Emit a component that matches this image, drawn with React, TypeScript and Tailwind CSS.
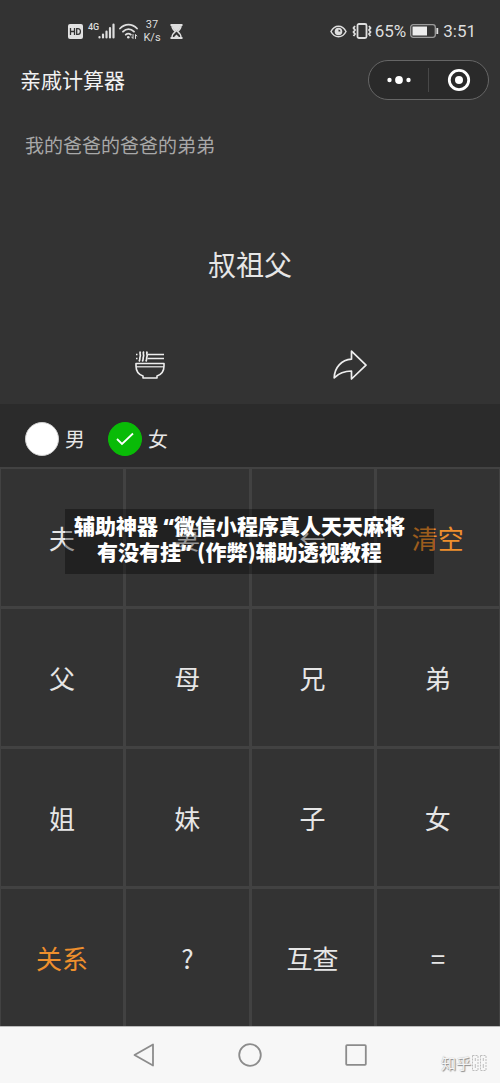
// Kinship calculator: pick relatives on the keypad and read the resulting title.
import React, { useState } from 'react';

interface Key {
  label: string;
  accent?: boolean;
}

const KEYS: Key[] = [
  { label: '夫' },
  { label: '妻' },
  { label: '←' },
  { label: '清空', accent: true },
  { label: '父' },
  { label: '母' },
  { label: '兄' },
  { label: '弟' },
  { label: '姐' },
  { label: '妹' },
  { label: '子' },
  { label: '女' },
  { label: '关系', accent: true },
  { label: '?' },
  { label: '互查' },
  { label: '=' },
];

function StatusBar() {
  return (
    <div className="flex h-[52px] items-center justify-between pt-[10px] pr-6 pl-[68px] font-[Roboto,sans-serif] text-[#dedede]">
      <div className="flex items-center">
        <svg width="15" height="15" viewBox="0 0 15 15">
          <rect width="15" height="15" rx="2" fill="#e2e2e2" />
          <path d="M2.5 4v7M6.5 4v7M2.5 7.5h4M8.7 4.6v5.8h1.2c1.6 0 2.5-1 2.5-2.9s-.9-2.9-2.5-2.9z" fill="none" stroke="#333" strokeWidth="1.3" />
        </svg>
        <span className="mb-2 ml-[5px] w-[9px] text-[9px] leading-[9px] font-medium">4G</span>
        <svg className="ml-px" width="17" height="16" viewBox="0 0 17 16" fill="none" stroke="currentColor" strokeWidth="2.2" strokeLinecap="round">
          <path d="M1.5 14v.5M5 11.5v3M8.5 8.500v6M12 5v9.500M15.500 1.500v13" />
        </svg>
        <svg className="ml-1" width="19" height="16" viewBox="0 0 19 16" fill="none" stroke="currentColor" strokeWidth="1.800" strokeLinecap="round">
          <path d="M1 5.500C6 .3 13 .3 18 5.500M4 8.700c3.400-3.500 7.600-3.500 11 0M6.800 11.700c1.500-1.500 3.500-1.500 5 0" />
          <circle cx="9.300" cy="14.300" r="1.300" fill="currentColor" stroke="none" />
          <path d="M14 11.500v4l-1.300-1.500M16.500 15.500v-4l1.300 1.500" strokeWidth="1" />
        </svg>
        <span className="ml-1 w-5 text-center text-[11px] leading-[13px]">
          37
          <br />
          K/s
        </span>
        <svg className="ml-2" width="13" height="15" viewBox="0 0 13 15" fill="none" stroke="currentColor">
          <path d="M.5 1h12M.5 14h12" strokeWidth="2" />
          <path d="M2 2c0 3 1.500 4 3.500 5.500C3.500 9 2 10.500 2 13.500M11 2c0 3-1.500 4-3.500 5.500 2 1.500 3.500 3 3.500 6" strokeWidth="1.500" />
          <path d="M2.500 2h8c-.3 2.500-1.500 4-4 5.500C4 6 2.800 4.500 2.500 2zM3.500 13.500l3-3 3 3z" fill="currentColor" stroke="none" />
        </svg>
      </div>

      <div className="flex items-center text-[17px] leading-5">
        <svg width="17" height="13" viewBox="0 0 17 13" fill="none" stroke="currentColor" strokeWidth="1.500">
          <path d="M1 6.500C4.500-.5 12.500-.5 16 6.500 12.500 13.500 4.500 13.500 1 6.500z" />
          <circle cx="8.500" cy="6.500" r="3.800" fill="currentColor" stroke="none" />
          <path d="M8.500 6.500V4.500a2 2 0 0 1 2 2z" fill="#333" stroke="none" />
        </svg>
        <svg className="ml-[5px]" width="20" height="16" viewBox="0 0 20 16" fill="none" stroke="currentColor">
          <rect x="5.500" y="1" width="9" height="14" rx="1.500" strokeWidth="1.800" />
          <path d="M3 3L1.500 5 3 7 1.500 9 3 11l-1.500 2M17 3l1.500 2L17 7l1.500 2-1.500 2 1.500 2" strokeWidth="1.800" />
        </svg>
        <span className="ml-[3px]">65%</span>
        <svg className="ml-1" width="29" height="14" viewBox="0 0 29 14">
          <rect x=".7" y=".7" width="24.600" height="12.600" rx="2.500" fill="none" stroke="#9b9b9b" strokeWidth="1.300" />
          <rect x="2.500" y="2.500" width="14.500" height="9" fill="#ececec" />
          <path d="M27.300 4v6" stroke="#dedede" strokeWidth="1.800" />
        </svg>
        <span className="ml-1">3:51</span>
      </div>
    </div>
  );
}

function TitleBar() {
  return (
    <header className="flex h-14 items-center justify-between pr-[11px] pl-5">
      <h1 className="pb-[2px] text-[21px] leading-7 text-[#f2f2f2]">亲戚计算器</h1>
      <div className="flex h-10 w-[121px] items-center rounded-full border border-[#666] bg-[#2a2a2a]">
        <button type="button" aria-label="更多" className="flex h-full flex-1 items-center justify-center">
          <svg width="24" height="8" viewBox="0 0 24 8" fill="#fff">
            <circle cx="2.500" cy="4" r="2.200" />
            <circle cx="12" cy="4" r="3.900" />
            <circle cx="21.500" cy="4" r="2.200" />
          </svg>
        </button>
        <span className="h-6 w-px bg-[#484848]" />
        <button type="button" aria-label="关闭" className="flex h-full flex-1 items-center justify-center">
          <svg width="24" height="24" viewBox="0 0 24 24">
            <circle cx="12" cy="12" r="9.700" fill="none" stroke="#fff" strokeWidth="2.800" />
            <circle cx="12" cy="12" r="4" fill="#fff" />
          </svg>
        </button>
      </div>
    </header>
  );
}

function ResultPanel() {
  return (
    <section className="pt-[23px] pb-[23px]">
      <p className="px-[25px] text-[19px] leading-7 text-[#a8a8a8]">我的爸爸的爸爸的弟弟</p>
      <p className="mt-[85px] text-center text-[28px] leading-10 text-[#e6e6e6]">叔祖父</p>
      <div className="mt-[65px] grid grid-cols-2 px-[50px] text-[#eee]">
        <button type="button" aria-label="赞赏" className="flex h-8 items-center justify-center">
          <svg width="30" height="30" viewBox="0 0 30 30" fill="none" stroke="currentColor" strokeWidth="1.600" strokeLinejoin="round">
            <path d="M1 13.500h28v2.500c0 5-2.500 8.500-7 10v2H8v-2c-4.500-1.500-7-5-7-10z" />
            <path d="M1 16.800h28" strokeWidth="1.200" />
            <path d="M12.500 4.500H29M12.500 8.500H29M1 4.500h1.500M1 8.500h1.500" strokeWidth="1.700" />
            <path d="M5.500 1.500c-1.500 2 .5 3-.3 5s.2 3-1.200 5M8.800 1.500c-1.500 2 .5 3-.3 5s.2 3-1.200 5M12.300 1.500c-1.500 2 .5 3-.3 5s.2 3-1.200 5" strokeWidth="1.700" />
          </svg>
        </button>
        <button type="button" aria-label="分享" className="flex h-8 items-center justify-center">
          <svg width="34" height="30" viewBox="0 0 34 30" fill="none" stroke="currentColor" strokeWidth="1.700" strokeLinejoin="round">
            <path d="M18.500 1.200 33 15.200 18.500 29v-8C11.500 21 6.500 22.500 1.200 27.800 1.500 17.500 8.500 9.800 18.500 9.200z" />
          </svg>
        </button>
      </div>
    </section>
  );
}

interface GenderOptionProps {
  value: string;
  selected: string;
  onSelect: (value: string) => void;
}

function GenderOption({ value, selected, onSelect }: GenderOptionProps) {
  return (
    <label className="flex items-center gap-[6px] text-[20px] leading-7 text-[#e6e6e6]">
      <span className="grid place-items-center">
        <input
          type="radio"
          name="gender"
          checked={selected === value}
          onChange={() => onSelect(value)}
          className="col-start-1 row-start-1 size-[34px] appearance-none rounded-full border border-[#d0d0d0] bg-white checked:border-[#09bb07] checked:bg-[#09bb07]"
        />
        {selected === value && (
          <svg className="pointer-events-none col-start-1 row-start-1" width="18" height="14" viewBox="0 0 18 14" fill="none" stroke="#fff" strokeWidth="1.800">
            <path d="M1 7l5 5L17 1.500" />
          </svg>
        )}
      </span>
      {value}
    </label>
  );
}

function Keypad() {
  return (
    <div className="grid grid-cols-4 gap-[3px] bg-[#424242] px-px pt-[2px]">
      {KEYS.map((key) => (
        <button
          key={key.label}
          type="button"
          className={`h-[137px] bg-[#333] text-[26px] leading-9 ${key.accent ? 'text-[#ee8f2d]' : 'text-[#e6e6e6]'}`}
        >
          {key.label}
        </button>
      ))}
    </div>
  );
}

// Caption laid over the first keypad row
function Caption() {
  return (
    <div className="absolute top-[42px] right-[66px] left-[65px] bg-black/35 pt-[3px] pr-5 pb-[10px] text-center text-[21px] leading-[26px] font-black whitespace-nowrap text-white">
      辅助神器<span className="font-['Noto_Sans'] leading-none"> “</span>微信小程序真人天天麻将
      <br />
      有没有挂<span className="font-['Noto_Sans'] leading-none">” </span>(作弊)辅助透视教程
    </div>
  );
}

function MissingGlyph() {
  return (
    <svg width="7" height="16" viewBox="0 0 7 16" fill="none" stroke="#bdbdbd">
      <path d="M.5.5h5.500v15H.5z" strokeDasharray="2 1" />
      <path d="M3.300 3v3M3.300 9v4" />
    </svg>
  );
}

function NavBar() {
  return (
    <nav className="grid h-[57px] grid-cols-[1fr_106px_106px_106px_1fr] items-center border-t border-[#bbb] bg-[#f7f7f7] text-[#8c8c8c]">
      <button type="button" aria-label="返回" className="col-start-2 flex justify-center">
        <svg width="22" height="24" viewBox="0 0 22 24" fill="none" stroke="currentColor" strokeWidth="1.800" strokeLinejoin="round">
          <path d="M20 1.500v21L1.500 12z" />
        </svg>
      </button>
      <button type="button" aria-label="主页" className="flex justify-center">
        <svg width="24" height="24" viewBox="0 0 24 24" fill="none" stroke="currentColor" strokeWidth="1.800">
          <circle cx="12" cy="12" r="10.800" />
        </svg>
      </button>
      <button type="button" aria-label="最近任务" className="flex justify-center">
        <svg width="22" height="22" viewBox="0 0 22 22" fill="none" stroke="currentColor" strokeWidth="1.800">
          <rect x="1.200" y="1.200" width="19.600" height="19.600" rx=".8" />
        </svg>
      </button>
      <span className="mt-4 mr-[13px] flex items-center gap-px justify-self-end text-[15px] leading-5 whitespace-nowrap text-[#f4f4f4] [text-shadow:1px_1px_1px_#888,0_0_1px_#aaa]">
        知乎
        <MissingGlyph />
        <MissingGlyph />
      </span>
    </nav>
  );
}

export default function App(): React.ReactElement {
  const [gender, setGender] = useState('女');

  return (
    <div className="min-h-screen bg-[#333] font-['Noto_Sans_CJK_SC',sans-serif]">
      <StatusBar />
      <TitleBar />
      <ResultPanel />
      <div className="flex h-[63px] items-center gap-[23px] bg-[#2b2b2b] px-[25px] pt-[6px]">
        <GenderOption value="男" selected={gender} onSelect={setGender} />
        <GenderOption value="女" selected={gender} onSelect={setGender} />
      </div>
      <div className="relative">
        <Keypad />
        <Caption />
      </div>
      <NavBar />
    </div>
  );
}
